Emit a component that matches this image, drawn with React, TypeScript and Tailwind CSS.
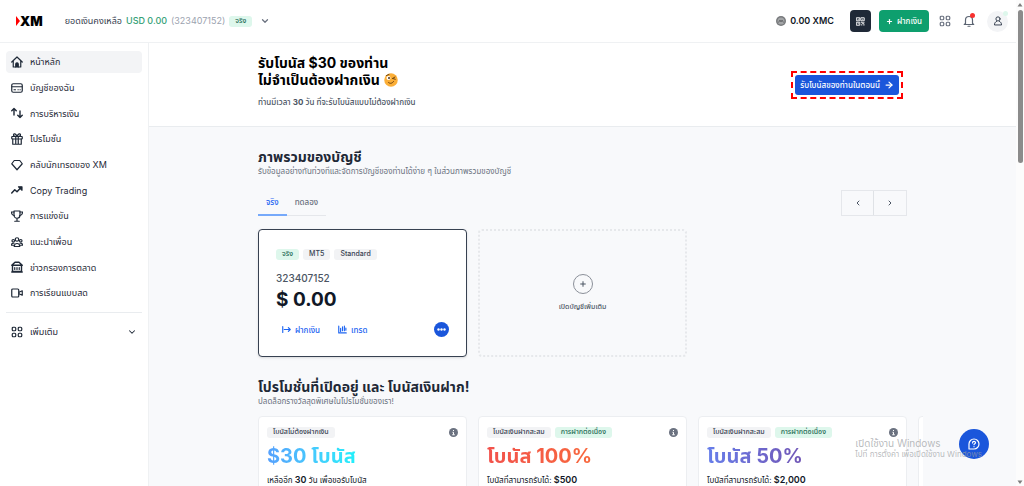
import { useState } from 'react';
import type { ReactNode } from 'react';
import { ArrowRight, ChevronDown, ChevronLeft, ChevronRight, Plus } from 'lucide-react';

interface NavItem {
  label: string;
  icon: ReactNode;
}

interface Promo {
  tags: string[];
  title: string;
  titleClass: string;
  note: ReactNode;
}

function Icon({ children, className = 'w-3 h-3' }: { children: ReactNode; className?: string }) {
  return (
    <svg
      viewBox="0 0 24 24"
      fill="none"
      stroke="currentColor"
      strokeWidth="2.4"
      strokeLinecap="round"
      strokeLinejoin="round"
      aria-hidden="true"
      className={`shrink-0 ${className}`}
    >
      {children}
    </svg>
  );
}

const gridShapes = (
  <>
    <rect x="2.5" y="2.5" width="7" height="7" rx="2" />
    <rect x="14.5" y="2.5" width="7" height="7" rx="2" />
    <rect x="2.5" y="14.5" width="7" height="7" rx="2" />
    <rect x="14.5" y="14.5" width="7" height="7" rx="2" />
  </>
);

const navItems: NavItem[] = [
  {
    label: 'หน้าหลัก',
    icon: (
      <>
        <path d="M1.5 12 12 2l10.5 10M4.5 10v12h15V10" />
        <path d="M9.5 22v-6a2.5 2.5 0 0 1 5 0v6" fill="currentColor" />
      </>
    ),
  },
  {
    label: 'บัญชีของฉัน',
    icon: (
      <>
        <rect x="1.5" y="3.5" width="21" height="17" rx="3" />
        <path d="M2 9.5h20M6 15.5h3M14 15.5h.5M18 15.5h.5" />
      </>
    ),
  },
  {
    label: 'การบริหารเงิน',
    icon: <path d="M6 16V3M1.5 7.500 6 3l4.500 4.500M18 8v13M13.500 16.500 18 21l4.500-4.500" strokeWidth="2.8" />,
  },
  {
    label: 'โปรโมชั่น',
    icon: (
      <>
        <rect x="1.5" y="7" width="21" height="5" rx="1" />
        <path d="M3.5 12v10.500h17V12M9.5 7v15.500M14.5 7v15.500" />
        <path d="M12 7C10 1 5 0 5 4c0 2 2 3 7 3 5 0 7-1 7-3 0-4-5-3-7 3Z" />
      </>
    ),
  },
  { label: 'คลับนักเทรดของ XM', icon: <path d="M6.5 3h11l5 6.500L12 21.500 1.5 9.500Z" /> },
  {
    label: 'Copy Trading',
    icon: (
      <>
        <path d="m1.5 18 6-6.500 4.500 4L20 7" strokeWidth="3" />
        <path d="M15 5.500h7v7Z" fill="currentColor" />
      </>
    ),
  },
  {
    label: 'การแข่งขัน',
    icon: (
      <>
        <path d="M6 2h12v8c0 4-3 6.500-6 6.500S6 14 6 10ZM12 16.500V22M7.500 22.500h9" />
        <path d="M6 4H1c0 5 2 7 6 7.500M18 4h5c0 5-2 7-6 7.500" />
      </>
    ),
  },
  {
    label: 'แนะนำเพื่อน',
    icon: (
      <>
        <circle cx="12" cy="7" r="3.5" />
        <circle cx="4.5" cy="9.5" r="2.5" />
        <circle cx="19.5" cy="9.5" r="2.5" />
        <path d="M6.500 21c0-8 11-8 11 0ZM1 18.500c0-3 2-4.500 5-4M23 18.500c0-3-2-4.500-5-4M1 18.500h5M18 18.500h5" />
      </>
    ),
  },
  {
    label: 'ข่าวกรองการตลาด',
    icon: (
      <>
        <path d="M1.500 8.500 8 2.500h8l6.500 6ZM3 8.500V21h18V8.500M1.500 22h21" strokeWidth="2.8" />
        <path d="M7.500 13v4M12 13v4M16.500 13v4" />
      </>
    ),
  },
  {
    label: 'การเรียนแบบสด',
    icon: (
      <>
        <rect x="1.5" y="4" width="14" height="16" rx="2" />
        <path d="m16 10.500 6.500-3v9l-6.500-3" />
      </>
    ),
  },
];

const promos: Promo[] = [
  {
    tags: ['โบนัสไม่ต้องฝากเงิน'],
    title: '$30 โบนัส',
    titleClass: 'from-[#56a0fd] to-[#1ff0fb]',
    note: (
      <>
        เหลืออีก <b className="text-[9px] font-semibold">30</b> วัน เพื่อขอรับโบนัส
      </>
    ),
  },
  {
    tags: ['โบนัสเงินฝากสะสม', 'การฝากต่อเนื่อง'],
    title: 'โบนัส 100%',
    titleClass: 'from-[#f2524c] to-[#f8683c]',
    note: (
      <>
        โบนัสที่สามารถรับได้: <b className="text-[9px] font-semibold">$500</b>
      </>
    ),
  },
  {
    tags: ['โบนัสเงินฝากสะสม', 'การฝากต่อเนื่อง'],
    title: 'โบนัส 50%',
    titleClass: 'from-[#667eea] to-[#7055b5]',
    note: (
      <>
        โบนัสที่สามารถรับได้: <b className="text-[9px] font-semibold">$2,000</b>
      </>
    ),
  },
];

function Tag({ children, green = false }: { children: ReactNode; green?: boolean }) {
  return (
    <span
      className={`flex h-[11px] items-center rounded-[3px] px-1.5 text-[7px] font-medium whitespace-nowrap ${
        green ? 'bg-[#def7ec] text-[#1f6b55]' : 'bg-[#f2f3f5] text-[#374151]'
      }`}
    >
      {children}
    </span>
  );
}

function Header() {
  return (
    <header className="flex h-[43px] shrink-0 items-center justify-between border-b border-[#eff1f3] bg-white pr-2 pl-4">
      <div className="flex items-center">
        <a href="#" aria-label="XM" className="flex items-center text-black">
          <svg viewBox="0 0 4 10" className="h-2.5 w-1" aria-hidden="true">
            <path d="M0 0l4 5-4 5Z" fill="#f00" />
          </svg>
          <span className="text-[13px] leading-none font-black">XM</span>
        </a>
        <div className="ml-[22px] flex items-center text-[9px] text-[#374151]">
          <span>ยอดเงินคงเหลือ</span>
          <span className="ml-1 font-medium text-[#359f76]">USD 0.00</span>
          <span className="ml-1 text-[#9ca3af]">(323407152)</span>
          <span className="ml-1">
            <Tag green>จริง</Tag>
          </span>
          <button type="button" aria-label="เลือกบัญชี" className="ml-2 text-[#6b7280]">
            <ChevronDown className="h-2.5 w-2.5" strokeWidth={3} />
          </button>
        </div>
      </div>

      <div className="flex items-center">
        <svg viewBox="0 0 20 20" className="mr-1 h-2.5 w-2.5" aria-hidden="true">
          <circle cx="10" cy="10" r="10" fill="#77797c" />
          <circle cx="10" cy="10" r="7" fill="#a3a5a7" />
          <path d="m5 13 3-5 2 4 2-4 3 5" stroke="#66686b" strokeWidth="2" fill="none" />
        </svg>
        <span className="text-[9px] font-semibold text-[#111827]">0.00 XMC</span>
        <button
          type="button"
          aria-label="QR"
          className="ml-4 flex h-[22px] w-[21px] items-center justify-center rounded-[4px] bg-[#1f2937] text-white"
        >
          <Icon className="h-[9px] w-[9px]">
            <path d="M2 2h8v8H2ZM14 2h8v8h-8ZM2 14h8v8H2ZM14 14h3v3M21 14v3h-2M14 21h2M20 21h2M5.500 6h1M17.500 6h1M5.500 18h1" />
          </Icon>
        </button>
        <button
          type="button"
          className="ml-2 flex h-[22px] items-center gap-1 rounded-[4px] bg-[#0e9f6e] px-[7px] text-[8px] font-medium text-white"
        >
          <Plus className="h-[7px] w-[7px]" strokeWidth={4} />
          ฝากเงิน
        </button>
        <button type="button" aria-label="แอป" className="ml-2.5 text-[#6b7280]">
          <Icon className="h-3 w-3">{gridShapes}</Icon>
        </button>
        <button type="button" aria-label="การแจ้งเตือน" className="relative ml-3 text-[#5b6472]">
          <Icon className="h-3 w-3">
            <path d="M5 17V10a7 7 0 0 1 14 0v7l2.500 2h-19ZM10 22.500h4" />
          </Icon>
          <span className="absolute -top-0.5 right-0 h-[5px] w-[5px] rounded-full bg-[#f8312f]" />
        </button>
        <button
          type="button"
          aria-label="โปรไฟล์"
          className="relative ml-3 flex h-[21px] w-[21px] items-center justify-center rounded-full bg-[#f3f4f6] text-[#374151]"
        >
          <Icon className="h-2.5 w-2.5">
            <circle cx="12" cy="7" r="5" />
            <path d="M8.500 13C5 14.500 3.500 17.500 3.500 21.500h17c0-4-1.500-7-5-8.500" />
          </Icon>
          <span className="absolute top-0 right-0 h-[5px] w-[5px] rounded-full bg-[#def7ec]" />
        </button>
      </div>
    </header>
  );
}

function Sidebar() {
  return (
    <aside className="w-[149px] shrink-0 border-r border-[#eff1f3] bg-white px-[6px] pt-2">
      <nav>
        <ul className="grid h-[253px] content-between">
          {navItems.map((item, i) => (
            <li key={item.label}>
              <a
                href="#"
                className={`flex h-[22px] items-center gap-[7px] rounded-[4px] px-[5px] text-[9px] text-[#1f2937] ${
                  i === 0 ? 'bg-[#f3f4f6]' : ''
                }`}
              >
                <Icon>{item.icon}</Icon>
                {item.label}
              </a>
            </li>
          ))}
        </ul>
      </nav>
      <div className="mt-2 border-t border-[#e9ecef] pt-2">
        <button
          type="button"
          className="flex h-[22px] w-full items-center gap-[7px] px-[5px] text-[9px] text-[#1f2937]"
        >
          <Icon>{gridShapes}</Icon>
          เพิ่มเติม
          <ChevronDown className="ml-auto h-2.5 w-2.5" strokeWidth={2.5} />
        </button>
      </div>
    </aside>
  );
}

function Hero() {
  return (
    <section className="h-[84px] border-b border-[#e9ecef] bg-white">
      <div className="mx-auto flex max-w-[649px] items-center justify-between pt-[11px]">
        <div>
          <h1 className="text-[14px] leading-[17px] font-bold text-black">
            รับโบนัส $30 ของท่าน
            <br />
            <span className="flex items-center gap-1">
              ไม่จำเป็นต้องฝากเงิน
              <svg viewBox="0 0 28 28" className="h-3.5 w-3.5" aria-hidden="true">
                <circle cx="14" cy="14" r="13.500" fill="#fbae37" />
                <circle cx="9" cy="10" r="4" fill="#fff" />
                <circle cx="10" cy="10" r="2" fill="#4a3420" />
                <path d="M17 11l5-3M17.500 11l5 1.500M5 5l5-2" stroke="#6b4210" strokeWidth="2" fill="none" strokeLinecap="round" />
                <path d="M9 19c3 3 8 2 10-2" stroke="#6b4210" strokeWidth="2" fill="none" strokeLinecap="round" />
              </svg>
            </span>
          </h1>
          <p className="mt-2 text-[8px] leading-3 font-medium text-[#4b5563]">
            ท่านมีเวลา <b>30</b> วัน ที่จะรับโบนัสแบบไม่ต้องฝากเงิน
          </p>
        </div>
        <div className="mt-2 mr-1 border-2 border-dashed border-[#f00] p-0.5">
          <button
            type="button"
            className="flex h-5 items-center gap-1 rounded-[3px] bg-[#1a56db] px-[5px] text-[8px] font-medium text-white"
          >
            รับโบนัสของท่านในตอนนี้
            <ArrowRight className="h-2.5 w-2.5" strokeWidth={3} />
          </button>
        </div>
      </div>
    </section>
  );
}

function AccountCard() {
  return (
    <article className="flex h-32 w-[209px] shrink-0 flex-col rounded-[4px] border border-[#374151] bg-white px-[17px] pt-[19px] text-[#4b5563] shadow-sm">
      <div className="flex gap-1">
        <Tag green>จริง</Tag>
        <Tag>MT5</Tag>
        <Tag>Standard</Tag>
      </div>
      <p className="mt-2.5 text-[10px] leading-4 font-medium">323407152</p>
      <p className="text-[19px] leading-7 font-bold text-[#111827]">$ 0.00</p>
      <div className="mt-2 flex items-center text-[8px] font-medium text-[#1c64f2]">
        <button type="button" className="ml-1.5 flex items-center gap-1">
          <Icon className="h-[9px] w-[9px]">
            <path d="M2 4v16M6 12h16M17 7l5 5-5 5" strokeWidth="3" />
          </Icon>
          ฝากเงิน
        </button>
        <button type="button" className="ml-[18px] flex items-center gap-1">
          <Icon className="h-[9px] w-[9px]">
            <path d="M2 3v18h20M7 9v8M12 5v10M17 3v12M21 8v6" strokeWidth="3" />
          </Icon>
          เทรด
        </button>
        <button
          type="button"
          aria-label="ตัวเลือก"
          className="ml-auto flex h-[15px] w-[15px] items-center justify-center rounded-full bg-[#1a56db] text-white"
        >
          <svg viewBox="0 0 9 3" className="w-[9px]" fill="currentColor" aria-hidden="true">
            <circle cx="1.5" cy="1.5" r="1.2" />
            <circle cx="4.5" cy="1.5" r="1.2" />
            <circle cx="7.5" cy="1.5" r="1.2" />
          </svg>
        </button>
      </div>
    </article>
  );
}

function AccountsSection() {
  const [tab, setTab] = useState('จริง');

  return (
    <section>
      <h2 className="text-[14px] leading-[17px] font-bold text-[#1f2937]">ภาพรวมของบัญชี</h2>
      <p className="text-[8px] leading-3 text-[#6b7280]">
        รับข้อมูลอย่างทันท่วงทีและจัดการบัญชีของท่านได้ง่าย ๆ ในส่วนภาพรวมของบัญชี
      </p>
      <div className="mt-3 flex items-center justify-between">
        <div className="flex border-b border-[#e5e7eb]">
          {['จริง', 'ทดลอง'].map((name) => (
            <button
              key={name}
              type="button"
              onClick={() => setTab(name)}
              className={`-mb-px h-[27px] border-b-2 px-2 text-[8px] font-medium ${
                tab === name ? 'border-[#76a9fa] text-[#1c64f2]' : 'border-transparent text-[#6b7280]'
              }`}
            >
              {name}
            </button>
          ))}
        </div>
        <div className="flex divide-x divide-[#dfe2e6] border border-[#e5e7eb] text-[#4b5563]">
          <button type="button" aria-label="ก่อนหน้า" className="flex h-6 w-8 items-center justify-center">
            <ChevronLeft className="h-2 w-2" strokeWidth={3} />
          </button>
          <button type="button" aria-label="ถัดไป" className="flex h-6 w-8 items-center justify-center">
            <ChevronRight className="h-2 w-2" strokeWidth={3} />
          </button>
        </div>
      </div>
      <div className="mt-[13px] flex gap-[11px]">
        <AccountCard />
        <button
          type="button"
          className="flex h-32 w-[209px] shrink-0 flex-col items-center justify-center gap-2 rounded-[4px] border-2 border-dotted border-[#e6e8eb] text-[7px] font-medium text-[#4b5563]"
        >
          <span className="flex h-5 w-5 items-center justify-center rounded-full border border-[#8b9099]">
            <Plus className="h-2 w-2" strokeWidth={3} />
          </span>
          เปิดบัญชีเพิ่มเติม
        </button>
      </div>
    </section>
  );
}

function PromosSection() {
  return (
    <section className="mt-[21px]">
      <h2 className="text-[14px] leading-[17px] font-bold text-[#1f2937]">
        โปรโมชั่นที่เปิดอยู่ และ โบนัสเงินฝาก!
      </h2>
      <p className="text-[8px] leading-3 text-[#6b7280]">ปลดล็อกรางวัลสุดพิเศษในโปรโมชั่นของเรา!</p>
      <div className="mt-[9px] -mr-4 flex gap-[11px] overflow-hidden">
        {promos.map((promo) => (
          <article
            key={promo.title}
            className="h-[120px] w-[209px] shrink-0 rounded-[4px] border border-[#eceef1] bg-white px-2 pt-2.5"
          >
            <div className="flex items-center gap-1">
              {promo.tags.map((tag, i) => (
                <Tag key={tag} green={i === 1}>
                  {tag}
                </Tag>
              ))}
              <button type="button" aria-label="ข้อมูล" className="ml-auto">
                <svg viewBox="0 0 18 18" className="h-[9px] w-[9px]" aria-hidden="true">
                  <circle cx="9" cy="9" r="9" fill="#6b7280" />
                  <path d="M9 4v2M7 8.500h2V13M6.500 13.500h5" stroke="#fff" strokeWidth="2" fill="none" />
                </svg>
              </button>
            </div>
            <h3
              className={`mt-1 w-fit bg-linear-to-r bg-clip-text text-[20px] leading-7 font-bold text-transparent ${promo.titleClass}`}
            >
              {promo.title}
            </h3>
            <p className="mt-1 text-[8px] leading-3 text-[#111827]">{promo.note}</p>
          </article>
        ))}
        <article className="h-[120px] w-[209px] shrink-0 rounded-[4px] border border-[#eceef1] bg-white" />
      </div>
    </section>
  );
}

export default function App() {
  return (
    <div className="relative flex h-screen overflow-hidden bg-[#f8f9fb] font-['Inter','Noto_Sans_Thai','Noto_Sans',sans-serif]">
      <div className="flex min-w-0 flex-1 flex-col">
        <Header />
        <div className="flex min-h-0 flex-1">
          <Sidebar />
          <main className="min-w-0 flex-1 overflow-hidden">
            <Hero />
            <div className="mx-auto max-w-[649px] pt-[21px]">
              <AccountsSection />
              <PromosSection />
            </div>
          </main>
        </div>
      </div>

      {/* Scrollbar */}
      <div className="flex w-2 shrink-0 flex-col items-center bg-[#fcfcfc] text-[#7d7d7d]">
        <svg viewBox="0 0 8 8" className="h-2 w-2" fill="currentColor" aria-hidden="true">
          <path d="M4 3 6.500 6.500h-5Z" />
        </svg>
        <div className="mt-0.5 h-[153px] w-[5px] rounded-full bg-[#8b8b8b]" />
        <svg viewBox="0 0 8 8" className="mt-auto h-2 w-2" fill="currentColor" aria-hidden="true">
          <path d="M4 6 1.500 2.500h5Z" />
        </svg>
      </div>

      {/* Help button */}
      <button
        type="button"
        aria-label="ช่วยเหลือ"
        className="absolute right-[35px] bottom-[27px] flex h-[30px] w-[30px] items-center justify-center rounded-full bg-[#1a56db] text-white"
      >
        <Icon className="h-3 w-3">
          <path d="M2 22V12A10 10 0 1 1 12 22Z" />
          <path d="M9 10c0-4 6-4 6-.5 0 2-3 2-3 4M12 17v.5" />
        </Icon>
      </button>

      {/* Windows activation notice */}
      <div className="pointer-events-none absolute right-[42px] bottom-[26px] text-[8px] leading-[11px] text-[#9a9da1]/70">
        <p className="text-[10px]">เปิดใช้งาน Windows</p>
        <p>ไปที่ การตั้งค่า เพื่อเปิดใช้งาน Windows</p>
      </div>
    </div>
  );
}
